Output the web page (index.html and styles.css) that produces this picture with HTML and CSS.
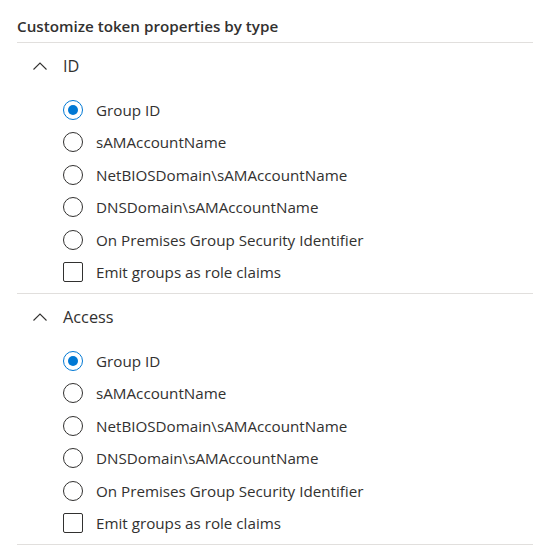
FILE: index.html
```html
<!DOCTYPE html>
<html lang="en">
<head>
<meta charset="utf-8">
<title>Customize token properties by type</title>
<link rel="stylesheet" href="styles.css">
</head>
<body>
<div class="page">
  <div class="title">Customize token properties by type</div>

  <section class="section">
    <div class="section-head">
      <svg class="chevron" width="14" height="8" viewBox="0 0 14 8"><polyline points="0.5,7.5 7,1 13.5,7.5" fill="none" stroke="#323130" stroke-width="1.1"/></svg>
      <span class="section-name">ID</span>
    </div>
    <div class="options">
      <label class="option"><span class="radio checked"></span><span class="label">Group ID</span></label>
      <label class="option"><span class="radio"></span><span class="label">sAMAccountName</span></label>
      <label class="option"><span class="radio"></span><span class="label">NetBIOSDomain\sAMAccountName</span></label>
      <label class="option"><span class="radio"></span><span class="label">DNSDomain\sAMAccountName</span></label>
      <label class="option"><span class="radio"></span><span class="label">On Premises Group Security Identifier</span></label>
      <label class="option"><span class="checkbox"></span><span class="label">Emit groups as role claims</span></label>
    </div>
  </section>

  <section class="section">
    <div class="section-head">
      <svg class="chevron" width="14" height="8" viewBox="0 0 14 8"><polyline points="0.5,7.5 7,1 13.5,7.5" fill="none" stroke="#323130" stroke-width="1.1"/></svg>
      <span class="section-name">Access</span>
    </div>
    <div class="options">
      <label class="option"><span class="radio checked"></span><span class="label">Group ID</span></label>
      <label class="option"><span class="radio"></span><span class="label">sAMAccountName</span></label>
      <label class="option"><span class="radio"></span><span class="label">NetBIOSDomain\sAMAccountName</span></label>
      <label class="option"><span class="radio"></span><span class="label">DNSDomain\sAMAccountName</span></label>
      <label class="option"><span class="radio"></span><span class="label">On Premises Group Security Identifier</span></label>
      <label class="option"><span class="checkbox"></span><span class="label">Emit groups as role claims</span></label>
    </div>
  </section>
</div>
</body>
</html>
```

FILE: styles.css
```css
html, body {
  margin: 0;
  padding: 0;
  background: #ffffff;
}

.page {
  padding-left: 17px;
  font-family: "Open Sans", "Noto Sans", sans-serif;
  color: #323130;
}

.title {
  font-size: 15.2px;
  font-weight: 600;
  line-height: 20px;
  padding-top: 16px;
  padding-bottom: 6px;
  border-bottom: 1px solid #e1dfdd;
}

.section {
  border-bottom: 1px solid #e1dfdd;
}

.section-head {
  height: 46px;
  display: flex;
  align-items: center;
  padding-left: 16px;
  gap: 16px;
}

.chevron {
  display: block;
  flex: none;
}

.section-name {
  font-size: 16.3px;
  line-height: 20px;
}

.options {
  display: flex;
  flex-direction: column;
  gap: 12.4px;
  padding: 11px 0 11px 46px;
}

.option {
  display: flex;
  align-items: center;
  height: 20px;
  gap: 13px;
}

.label {
  font-size: 15.2px;
  line-height: 20px;
}

.radio {
  box-sizing: border-box;
  width: 20px;
  height: 20px;
  border: 1px solid #323130;
  border-radius: 50%;
  flex: none;
  display: flex;
  align-items: center;
  justify-content: center;
}

.radio.checked {
  border-color: #0078d4;
}

.radio.checked::after {
  content: "";
  width: 10px;
  height: 10px;
  border-radius: 50%;
  background: #0078d4;
}

.checkbox {
  box-sizing: border-box;
  width: 20px;
  height: 20px;
  border: 1px solid #323130;
  border-radius: 2px;
  flex: none;
}
```
